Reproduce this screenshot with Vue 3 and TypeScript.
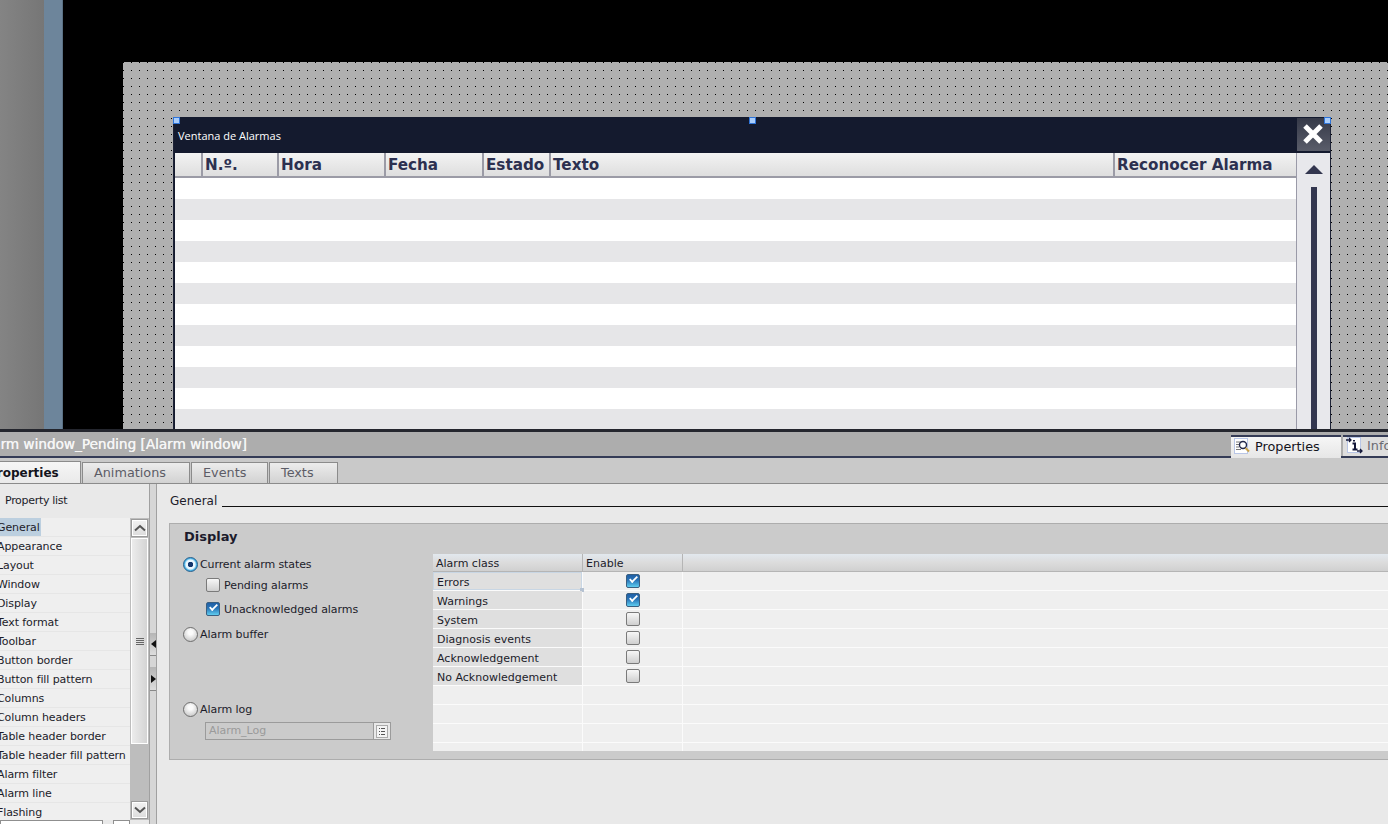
<script setup lang="ts">
const columns = [
  { label: '', width: 28 },
  { label: 'N.º.', width: 76 },
  { label: 'Hora', width: 107 },
  { label: 'Fecha', width: 98 },
  { label: 'Estado', width: 67 },
  { label: 'Texto', width: 564 },
  { label: 'Reconocer Alarma', width: 181 },
]
const stripes = Array.from({ length: 12 }, (_, i) => i)
const properties = ['General', 'Appearance', 'Layout', 'Window', 'Display', 'Text format', 'Toolbar', 'Button border', 'Button fill pattern', 'Columns', 'Column headers', 'Table header border', 'Table header fill pattern', 'Alarm filter', 'Alarm line', 'Flashing']
const tabs = ['Properties', 'Animations', 'Events', 'Texts']
const alarmClasses = [
  { name: 'Errors', on: true },
  { name: 'Warnings', on: true },
  { name: 'System', on: false },
  { name: 'Diagnosis events', on: false },
  { name: 'Acknowledgement', on: false },
  { name: 'No Acknowledgement', on: false },
]
const emptyRows = [0, 1, 2, 3]
</script>

<template>
  <div class="page">
    <section class="workspace">
      <div class="side-gray"></div>
      <div class="side-blue"></div>
      <div class="stage">
        <div class="canvas">
          <div class="window">
            <i class="handle h-left"></i>
            <i class="handle h-mid"></i>
            <i class="handle h-right"></i>
            <div class="win-title">
              <span class="win-title-text">Ventana de Alarmas</span>
              <button class="win-close">
                <svg width="24" height="24" viewBox="0 0 24 24"><path d="M4 4 L20 20 M20 4 L4 20" stroke="#fff" stroke-width="5" fill="none" /></svg>
              </button>
            </div>
            <div class="win-body">
              <div class="alarm-table">
                <div class="alarm-head">
                  <div v-for="c in columns" :key="c.label" class="alarm-col" :style="{ width: c.width + 'px' }">{{ c.label }}</div>
                </div>
                <div v-for="s in stripes" :key="s" class="alarm-row"></div>
              </div>
              <div class="win-scroll">
                <svg width="18" height="10" viewBox="0 0 18 10" class="win-arrow"><path d="M9 0 L18 9 H0 Z" fill="#33364f" /></svg>
                <div class="win-thumb"></div>
              </div>
            </div>
          </div>
        </div>
      </div>
    </section>

    <section class="inspector">
      <div class="ins-title">
        <span class="ins-title-text">Alarm window_Pending [Alarm window]</span>
        <div class="ins-views">
          <div class="view-tab active">
            <svg width="17" height="17" viewBox="0 0 17 17">
              <rect x="0.5" y="0.5" width="13" height="15" fill="#fff" stroke="#b9c6e6" />
              <path d="M2 4h5M2 6.5h3M2 9h3M2 11.500h5" stroke="#777" stroke-width="1" />
              <circle cx="9" cy="7" r="3.500" fill="#fff" stroke="#23284a" stroke-width="1.400" />
              <path d="M11.500 10l3.500 3.500" stroke="#c9a24a" stroke-width="2" />
            </svg>
            <span>Properties</span>
          </div>
          <div class="view-tab">
            <svg width="17" height="17" viewBox="0 0 17 17">
              <rect x="1.500" y="0.500" width="13" height="15" fill="#fff" stroke="#b9c6e6" />
              <path d="M0 3h5M3 1l2 2-2 2" stroke="#14183a" stroke-width="1.300" fill="none" />
              <path d="M8 3v1.500M6.500 6.500H9v6M6.500 12.500h5" stroke="#14183a" stroke-width="2" fill="none" />
              <path d="M11 14h5M14 12l2 2-2 2" stroke="#14183a" stroke-width="1.300" fill="none" />
            </svg>
            <span class="muted">Info</span>
          </div>
        </div>
      </div>
      <div class="tab-row">
        <div v-for="(t, i) in tabs" :key="t" class="tab" :class="['tab-' + i, { active: i === 0 }]"><span>{{ t }}</span></div>
      </div>
      <div class="ins-body">
        <aside class="nav">
          <div class="nav-label">Property list</div>
          <div class="nav-list-wrap">
            <ul class="nav-list">
              <li v-for="(p, i) in properties" :key="p"><span :class="{ sel: i === 0 }">{{ p }}</span></li>
            </ul>
            <div class="nav-scroll">
              <div class="sb-btn">
                <svg width="12" height="8" viewBox="0 0 12 8"><path d="M1 6.500 L6 2 L11 6.500" stroke="#555" stroke-width="2" fill="none" /></svg>
              </div>
              <div class="sb-thumb">
                <svg width="10" height="9" viewBox="0 0 10 9"><path d="M1 1.500H9M1 3.500H9M1 5.500H9M1 7.500H9" stroke="#666" stroke-width="1" /></svg>
              </div>
              <div class="sb-track"></div>
              <div class="sb-btn">
                <svg width="12" height="8" viewBox="0 0 12 8"><path d="M1 1.500 L6 6 L11 1.500" stroke="#555" stroke-width="2" fill="none" /></svg>
              </div>
            </div>
          </div>
          <div class="nav-hscroll"><i class="hs-a"></i><i class="hs-b"></i></div>
        </aside>
        <div class="splitter">
          <div class="split-btn">
            <svg width="5" height="8" viewBox="0 0 5 8"><path d="M5 0V8L0 4Z" fill="#111" /></svg>
          </div>
          <div class="split-btn second">
            <svg width="5" height="8" viewBox="0 0 5 8"><path d="M0 0V8L5 4Z" fill="#111" /></svg>
          </div>
        </div>
        <main class="main">
          <div class="main-head"><span>General</span><i></i></div>
          <div class="group">
            <div class="group-title">Display</div>
            <div class="group-body">
              <div class="options">
                <label class="opt first"><i class="radio on"></i>Current alarm states</label>
                <label class="chk-line"><i class="check"></i>Pending alarms</label>
                <label class="chk-line second"><i class="check on"></i>Unacknowledged alarms</label>
                <label class="opt buffer"><i class="radio"></i>Alarm buffer</label>
                <label class="opt log"><i class="radio"></i>Alarm log</label>
                <div class="log-field">
                  <span>Alarm_Log</span>
                  <b>
                    <svg width="12" height="13" viewBox="0 0 12 13"><rect x="0.500" y="0.500" width="11" height="12" fill="#f4f4f4" stroke="#aaa" /><path d="M3 3.500h1M5 3.500h4M3 6.500h1M5 6.500h4M3 9.500h1M5 9.500h4" stroke="#555" /></svg>
                  </b>
                </div>
              </div>
              <div class="classes">
                <div class="cl-row cl-head">
                  <div class="c1">Alarm class</div>
                  <div class="c2">Enable</div>
                  <div class="c3"></div>
                </div>
                <div v-for="(a, i) in alarmClasses" :key="a.name" class="cl-row">
                  <div class="c1 name" :class="{ focus: i === 0 }">{{ a.name }}<i v-if="i === 0" class="cell-grip"></i></div>
                  <div class="c2 mid"><i class="check" :class="{ on: a.on }"></i></div>
                  <div class="c3"></div>
                </div>
                <div v-for="r in emptyRows" :key="r" class="cl-row" :class="{ short: r === 3 }">
                  <div class="c1"></div>
                  <div class="c2"></div>
                  <div class="c3"></div>
                </div>
              </div>
            </div>
          </div>
        </main>
      </div>
    </section>
  </div>
</template>

<style>
html, body { margin: 0; background: #000; overflow: hidden; }
</style>

<style scoped>
.page { width: 1388px; height: 824px; overflow: hidden; display: flex; flex-direction: column; font-family: "DejaVu Sans", sans-serif; font-size: 11px; color: #1c1c2a; }
.workspace { height: 429px; flex: none; display: flex; overflow: hidden; background: #000; }
.side-gray { width: 44px; background: linear-gradient(90deg, #848484, #767676); }
.side-blue { width: 19px; background: #6d859b; border-right: 1px solid #5a7084; box-sizing: border-box; }
.stage { flex: 1; padding: 62px 0 0 60px; min-width: 0; }
.canvas { height: 500px; padding: 55px 0 0 50px; background-color: #b0b0b0; background-image: url("data:image/svg+xml,%3Csvg xmlns='http://www.w3.org/2000/svg' width='8' height='8' shape-rendering='crispEdges'%3E%3Crect width='1' height='1' fill='%23000'/%3E%3C/svg%3E"); background-size: 8px 8px; background-position: 8px 0; }
.window { position: relative; width: 1158px; border: solid #1d2236; border-width: 0 1px 0 1px; box-sizing: border-box; }
.handle { position: absolute; width: 5px; height: 5px; background: #a9cdfb; border: 1px solid #2f74d8; top: 0; z-index: 2; }
.h-left { left: -1px; }
.h-mid { left: 575px; }
.h-right { right: -1px; }
.win-title { height: 35px; background: #141a2e; display: flex; align-items: center; justify-content: space-between; }
.win-title-text { color: #fff; font-family: "Open Sans", sans-serif; font-size: 11px; margin: 2px 0 0 4px; }
.win-close { width: 33px; height: 33px; border: 0; padding: 0 2px 2px 0; box-sizing: border-box; background: linear-gradient(#353948, #5a5d6a); display: flex; align-items: center; justify-content: center; }
.win-body { display: flex; padding-top: 1px; background: #141a2e; }
.alarm-table { width: 1121px; margin-left: 1px; background: #fff; }
.alarm-head { height: 25px; display: flex; box-sizing: border-box; background: linear-gradient(#f3f3f3, #dedede); border-bottom: 2px solid #9b9ba6; }
.alarm-col { box-sizing: border-box; border-right: 2px solid #9b9ba6; padding-left: 2px; font-weight: 700; font-size: 15.200px; line-height: 25px; height: 23px; color: #2c3050; white-space: nowrap; }
.alarm-col:last-child { border-right: 0; }
.alarm-row { height: 21px; }
.alarm-row:nth-child(odd) { background: #e6e6e8; }
.win-scroll { flex: 1; height: 300px; background: #e8e8ec; border-left: 1px solid #9a9aa8; display: flex; flex-direction: column; align-items: center; }
.win-arrow { margin-top: 12px; }
.win-thumb { width: 6px; flex: 1; margin-top: 12px; background: #33364f; }

.inspector { flex: 1; display: flex; flex-direction: column; min-height: 0; background: #e9e9e9; border-top: 3px solid #24262e; }
.ins-title { height: 26px; flex: none; box-sizing: border-box; background: #adadad; display: flex; justify-content: space-between; align-items: flex-end; border-bottom: 2px solid #343b56; }
.ins-title-text { color: #f6f6f6; font-size: 13.600px; text-shadow: 0.3px 0 0 #f6f6f6; line-height: 24px; align-self: center; margin-left: -21px; white-space: nowrap; }
.ins-views { display: flex; gap: 2px; width: 157px; margin-bottom: -2px; }
.view-tab { width: 110px; height: 23px; box-sizing: border-box; flex: none; display: flex; align-items: center; gap: 4px; padding: 0 0 2px 3px; background: linear-gradient(#f6f6f6, #e6e6e6); border-top: 2px solid #343b56; font-size: 12.800px; color: #14141c; }
.view-tab .muted { color: #6a6a72; }
.view-tab:not(.active) { flex: 1; background: #dedede; height: 21px; }
.tab-row { height: 26px; flex: none; background: #c9c9c9; display: flex; align-items: flex-end; border-bottom: 1px solid #8b8b8b; box-sizing: border-box; gap: 1px; overflow: hidden; }
.tab { height: 21px; box-sizing: border-box; flex: none; border: 1px solid #8b8b8b; border-bottom: 0; background: linear-gradient(#ececec, #d2d2d2); color: #5c5c66; font-size: 12.800px; text-align: left; padding-left: 11px; line-height: 20px; }
.tab.active { height: 23px; width: 81px; background: linear-gradient(#f6f6f6, #e9e9e9); color: #14141c; font-weight: 700; font-size: 12px; margin-bottom: -1px; border-left: 0; line-height: 22px; padding-left: 0; }
.tab.active span { margin-left: -12px; display: inline-block; }
.tab-1 { width: 108px; }
.tab-2 { width: 77px; }
.tab-3 { width: 69px; }
.ins-body { flex: 1; display: flex; min-height: 0; }
.nav { width: 149px; flex: none; display: flex; flex-direction: column; }
.nav-label { height: 34px; flex: none; padding-left: 5px; line-height: 33px; letter-spacing: -0.3px; }
.nav-list-wrap { display: flex; height: 302px; flex: none; }
.nav-list { list-style: none; margin: 0; padding: 0; width: 130px; background: #efefef; overflow: hidden; flex: none; }
.nav-list li { height: 19px; line-height: 19px; box-sizing: border-box; border-bottom: 1px solid #e6e6e6; white-space: nowrap; margin-left: -3px; letter-spacing: -0.1px; }
.nav-list .sel { background: #bccfdf; display: inline-block; padding-right: 1px; height: 18px; }
.nav-scroll { width: 19px; flex: none; background: #bdbdbd; display: flex; flex-direction: column; align-items: stretch; box-sizing: border-box; padding: 1px; }
.sb-btn { height: 18px; flex: none; box-sizing: border-box; border: 1px solid #9b9b9b; outline: 1px solid #fff; outline-offset: -2px; background: linear-gradient(#f2f2f2, #dcdcdc); display: flex; align-items: center; justify-content: center; }
.sb-thumb { height: 206px; flex: none; box-sizing: border-box; margin-top: 1px; border: 1px solid #fff; background: linear-gradient(90deg, #ececec, #d4d4d4); display: flex; align-items: center; justify-content: center; }
.sb-track { flex: 1; }
.nav-hscroll { display: flex; height: 4px; flex: none; }
.hs-a { width: 103px; background: #fff; border: 1px solid #8f8f8f; border-bottom: 0; box-sizing: border-box; }
.hs-b { width: 17px; margin-left: 10px; background: #fff; border: 1px solid #8f8f8f; border-bottom: 0; box-sizing: border-box; }
.splitter { width: 8px; flex: none; box-sizing: border-box; background: #d6d6d6; border-left: 1px solid #a0a0a0; border-right: 1px solid #a0a0a0; padding-top: 149px; display: flex; flex-direction: column; }
.split-btn { height: 23px; background: linear-gradient(#b5b5b5, #dddddd); border-bottom: 1px solid #888; display: flex; align-items: center; padding-left: 1px; box-sizing: border-box; }
.split-btn.second { margin-top: 11px; height: 24px; }
.main { flex: 1; min-width: 0; padding: 0 0 0 12px; }
.main-head { display: flex; align-items: flex-start; height: 23px; margin-top: 8px; padding-left: 1px; box-sizing: border-box; gap: 5px; font-size: 12px; }
.main-head span { line-height: 18px; }
.main-head i { flex: 1; height: 1px; background: #111; margin-top: 14px; }
.group { margin-top: 8px; width: 1300px; height: 237px; box-sizing: border-box; background: #cbcbcb; border: 1px solid #adadad; }
.group-title { font-weight: 700; font-size: 13px; line-height: 18px; padding: 4px 0 0 14px; color: #1b1b2c; }
.group-body { display: flex; padding-top: 8px; }
.options { width: 263px; flex: none; display: flex; flex-direction: column; padding: 2px 0 0 13px; box-sizing: border-box; letter-spacing: -0.05px; }
.opt, .chk-line { display: flex; align-items: center; white-space: nowrap; }
.opt { gap: 2px; height: 16px; }
.opt.first { letter-spacing: -0.1px; }
.chk-line { height: 16px; padding-left: 23px; gap: 4px; margin-top: 5px; }
.chk-line.second { margin-top: 8px; }
.opt.buffer { margin-top: 9px; }
.opt.log { margin-top: 59px; }
.radio { width: 15px; height: 15px; flex: none; box-sizing: border-box; border-radius: 50%; border: 1px solid #6e6e6e; background: radial-gradient(circle at 50% 35%, #fbfbfb 20%, #cfcfcf 75%); display: block; }
.radio.on { border-color: #235d8c; background: radial-gradient(circle, #12366e 0 2.500px, #eaf7ff 3px 4.500px, #4db4e6 6px); }
.check { width: 14px; height: 14px; flex: none; box-sizing: border-box; border: 1px solid #7a7a7a; border-radius: 2px; background: linear-gradient(#f7f7f7, #cfcfcf); display: block; position: relative; }
.check.on { border-color: #3a5f80; background: linear-gradient(#1f5fa6 0, #2a75b8 45%, #5fcdf0); }
.check.on::after { content: ""; position: absolute; left: 2px; top: 1px; width: 7px; height: 3px; border: solid #fff; border-width: 0 0 2.500px 2.500px; transform: rotate(-45deg) scale(0.9); }
.log-field { margin: 5px 0 0 22px; width: 186px; height: 18px; box-sizing: border-box; border: 1px solid #9b9b9b; display: flex; justify-content: space-between; color: #9a9a9a; line-height: 15px; padding-left: 3px; }
.log-field b { width: 16px; background: #e9e9e9; border-left: 1px solid #9b9b9b; display: flex; align-items: center; justify-content: center; font-weight: 400; }
.classes { flex: 1; min-width: 0; background: #efefef; display: flex; flex-direction: column; }
.cl-row { display: flex; height: 19px; flex: none; box-sizing: border-box; border-bottom: 1px solid #fbfbfb; }
.cl-row.short { height: 8px; border-bottom: 0; }
.cl-head { height: 18px; background: linear-gradient(#e2e8ee, #dcdcdc 50%, #d0d0d0); border-bottom: 1px solid #b5b5b5; }
.c1 { width: 149px; flex: none; box-sizing: border-box; padding-left: 3px; line-height: 19px; white-space: nowrap; position: relative; }
.c2 { width: 100px; flex: none; box-sizing: border-box; border-left: 1px solid #fbfbfb; padding-left: 3px; line-height: 19px; }
.c3 { flex: 1; border-left: 1px solid #fbfbfb; }
.cl-head .c1, .cl-head .c2 { line-height: 19px; height: 17px; }
.cl-head .c2, .cl-head .c3 { border-left-color: #b5b5b5; }
.name { background: #dfdfdf; padding-left: 4px; line-height: 21px; height: 18px; }
.name.focus { outline: 1px solid #c8d6e4; outline-offset: -1px; }
.cell-grip { position: absolute; right: -2px; bottom: -2px; width: 4px; height: 4px; background: #b5c2d2; }
.mid { display: flex; justify-content: center; align-items: center; padding: 0 0 1px 0; }
</style>
